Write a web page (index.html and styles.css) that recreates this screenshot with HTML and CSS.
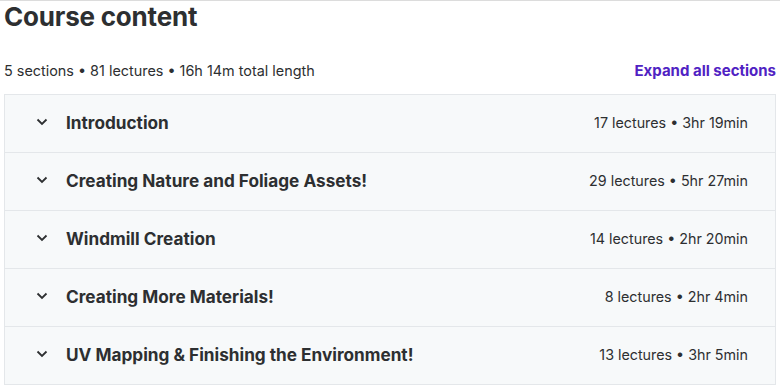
FILE: index.html
```html
<!DOCTYPE html>
<html lang="en">
<head>
    <meta charset="UTF-8">
    <meta name="viewport" content="width=device-width, initial-scale=1.0">
    <title>Course content</title>
    <link rel="stylesheet" href="styles.css">
</head>
<body>
    <div class="page">
        <h2 class="title">Course content</h2>
        <div class="summary">
            <span>5 sections • 81 lectures • 16h 14m total length</span>
            <a href="#" class="expand">Expand all sections</a>
        </div>
        <div class="sections">
            <div class="section">
                <svg class="chev" viewBox="0 0 12 8"><path d="M1.5 1.5 6 6l4.5-4.5"/></svg>
                <span class="name">Introduction</span>
                <span class="meta">17 lectures • 3hr 19min</span>
            </div>
            <div class="section">
                <svg class="chev" viewBox="0 0 12 8"><path d="M1.5 1.5 6 6l4.5-4.5"/></svg>
                <span class="name">Creating Nature and Foliage Assets!</span>
                <span class="meta">29 lectures • 5hr 27min</span>
            </div>
            <div class="section">
                <svg class="chev" viewBox="0 0 12 8"><path d="M1.5 1.5 6 6l4.5-4.5"/></svg>
                <span class="name">Windmill Creation</span>
                <span class="meta">14 lectures • 2hr 20min</span>
            </div>
            <div class="section">
                <svg class="chev" viewBox="0 0 12 8"><path d="M1.5 1.5 6 6l4.5-4.5"/></svg>
                <span class="name">Creating More Materials!</span>
                <span class="meta">8 lectures • 2hr 4min</span>
            </div>
            <div class="section">
                <svg class="chev" viewBox="0 0 12 8"><path d="M1.5 1.5 6 6l4.5-4.5"/></svg>
                <span class="name">UV Mapping &amp; Finishing the Environment!</span>
                <span class="meta">13 lectures • 3hr 5min</span>
            </div>
        </div>
    </div>
</body>
</html>
```

FILE: styles.css
```css
body {
    margin: 0;
    font-family: Inter, "Noto Sans", sans-serif;
    color: #2d2f31;
    background: #fff;
    border-top: 1px solid #dcdcdc;
}
.page {
    padding: 0 4px;
}
.title {
    margin: 0;
    font-size: 26px;
    font-weight: 700;
    line-height: 31px;
    letter-spacing: -0.2px;
}
.summary {
    display: flex;
    justify-content: space-between;
    align-items: center;
    margin-top: 26px;
    height: 24px;
    font-size: 14.4px;
    margin-bottom: 12px;
}
.expand {
    color: #5022c3;
    font-weight: 700;
    font-size: 15px;
    text-decoration: none;
}
.sections {
    border: 1px solid #e4e7ea;
}
.section {
    display: flex;
    align-items: center;
    height: 54px;
    background: #f7f9fa;
    border-bottom: 1px solid #e4e7ea;
    padding: 0 27px 3px 31px;
}
.section:last-child {
    border-bottom: none;
}
.chev {
    width: 12px;
    height: 8px;
    fill: none;
    stroke: #2d2f31;
    stroke-width: 1.8;
    margin-right: 18px;
}
.name {
    font-weight: 700;
    font-size: 17.2px;
    flex: 1;
}
.meta {
    font-size: 14.3px;
}
```
